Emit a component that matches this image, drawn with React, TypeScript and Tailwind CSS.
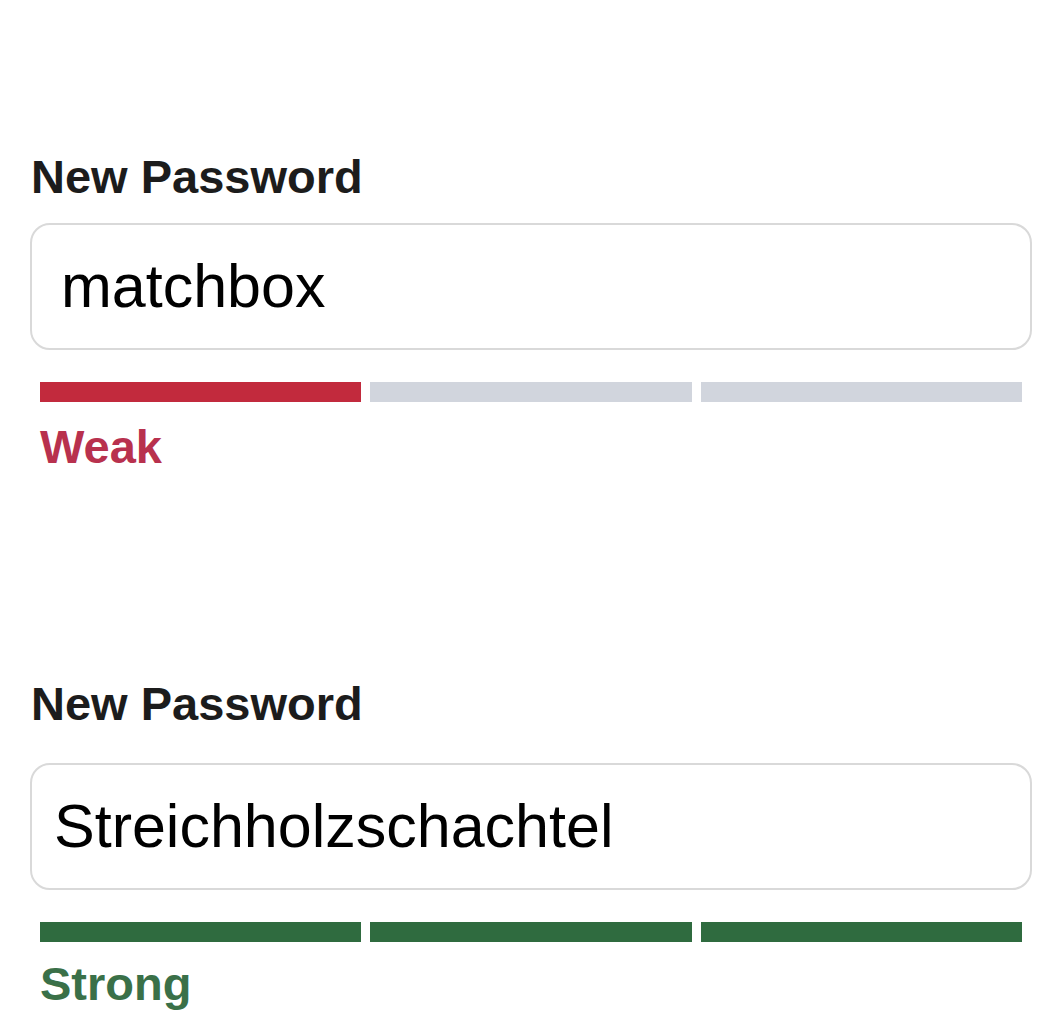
import React from 'react';

type Field = {
  value: string;
  level: number;
  label: string;
  barColor: string;
  textColor: string;
  textPad: string;
  labelGap: string;
  hintGap: string;
};

const FIELDS: Field[] = [
  {
    value: 'matchbox',
    level: 1,
    label: 'Weak',
    barColor: 'bg-[#c22a3d]',
    textColor: 'text-[#b8314e]',
    textPad: 'pl-[29px]',
    labelGap: 'mt-[23px]',
    hintGap: 'mt-[21px]',
  },
  {
    value: 'Streichholzschachtel',
    level: 3,
    label: 'Strong',
    barColor: 'bg-[#2f6b3f]',
    textColor: 'text-[#3a7048]',
    textPad: 'pl-[22px]',
    labelGap: 'mt-[36px]',
    hintGap: 'mt-[18px]',
  },
];

function PasswordField({ field }: { field: Field }) {
  return (
    <div className="flex flex-col">
      <label className="pl-[1px] text-[47px] leading-none font-bold text-[#1c1c1c]">
        New Password
      </label>
      <div
        className={`${field.labelGap} flex h-[127px] items-center rounded-[20px] border-2 border-[#d9d9d9] bg-white ${field.textPad}`}
      >
        <span className="text-[61px] leading-none text-black">{field.value}</span>
      </div>
      {/* strength meter */}
      <div className="mt-[32px] grid grid-cols-3 gap-[9px] px-[10px]">
        {[0, 1, 2].map((i) => (
          <div key={i} className={`h-[20px] ${i < field.level ? field.barColor : 'bg-[#d1d5dd]'}`} />
        ))}
      </div>
      <span className={`${field.hintGap} pl-[10px] text-[47px] leading-none font-bold ${field.textColor}`}>
        {field.label}
      </span>
    </div>
  );
}

export default function App() {
  return (
    <div
      className="min-h-screen w-[1051px] bg-white pl-[30px] pr-[19px] pt-[153px]"
      style={{ fontFamily: '"Liberation Sans", Arial, sans-serif' }}
    >
      <div className="flex flex-col gap-[210px]">
        {FIELDS.map((f) => (
          <PasswordField key={f.label} field={f} />
        ))}
      </div>
    </div>
  );
}
